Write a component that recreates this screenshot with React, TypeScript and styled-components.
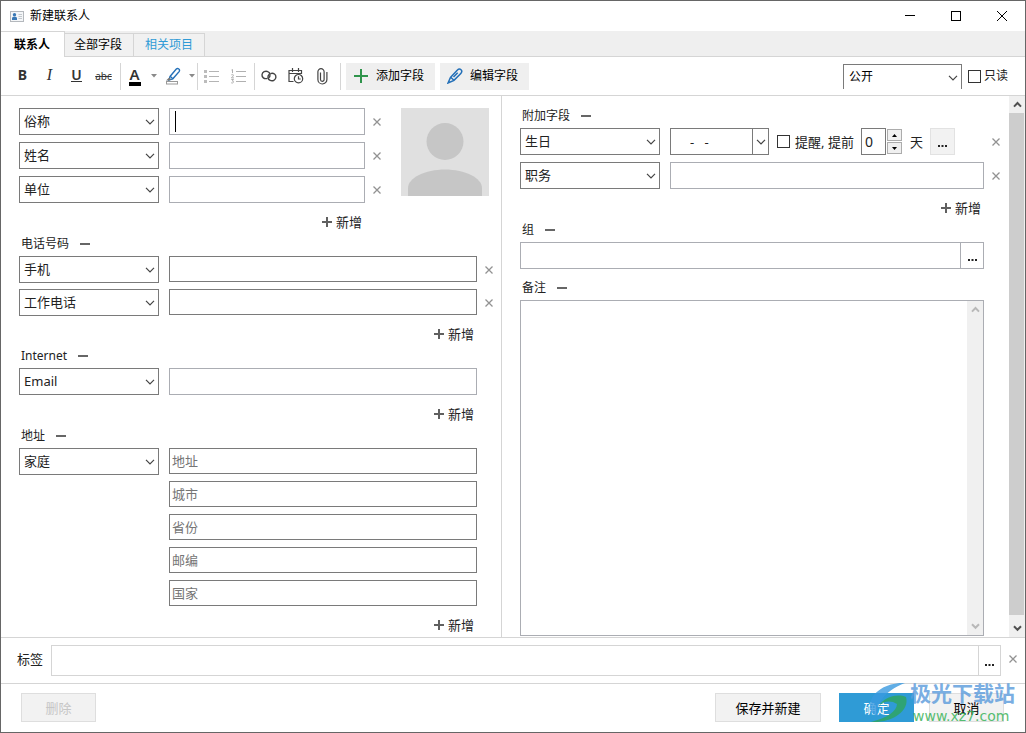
import React from "react";
import styled, { createGlobalStyle, css } from "styled-components";

const line = "#d5d5d5";
const dark = "#7a7a7a";
const light = "#abadb3";

const GlobalStyle = createGlobalStyle`
  *, *::before, *::after { box-sizing: border-box; }
  body { margin: 0; background: #fff; }
  body, button, input, select, textarea {
    font-family: "Noto Sans", "Noto Sans CJK SC", sans-serif;
    font-size: 13px;
    line-height: 18px;
    color: #222;
  }
  button { background: none; border: 0; padding: 0; margin: 0; }
  svg { display: block; }
`;

const Window = styled.div`
  position: relative;
  display: flex;
  flex-direction: column;
  min-height: 100vh;
  border: 1px solid #666;
  background: #fff;
`;

const TitleBar = styled.header`
  display: flex;
  align-items: center;
  height: 30px;
  padding-left: 9px;
`;
const Title = styled.h1`
  flex: 1;
  margin: 0 0 0 6px;
  font-size: 12px;
  font-weight: 400;
  color: #000;
`;
const CaptionButton = styled.button`
  display: flex;
  align-items: center;
  justify-content: center;
  width: 46px;
  height: 30px;
`;

const TabBar = styled.nav`
  display: flex;
  align-items: flex-end;
  height: 26px;
  background: #efefef;
  box-shadow: inset 0 -1px 0 ${line};
`;
const Tab = styled.button<{ $active?: boolean; $accent?: boolean }>`
  height: 24px;
  padding: 0 11px 0 ${(p) => (p.$accent ? 11 : 9)}px;
  border: 1px solid ${line};
  border-left: 0;
  background: #f1f1f1;
  font-size: 12px;
  color: ${(p) => (p.$accent ? "#2f9bd6" : "#000")};
  ${(p) =>
    p.$active &&
    css`
      height: 26px;
      padding: 0 14px 0 13px;
      border-bottom: 0;
      background: #fff;
      font-weight: 700;
    `}
`;

const Toolbar = styled.div`
  display: flex;
  align-items: center;
  height: 39px;
  padding: 0 17px 0 8px;
  border-bottom: 1px solid ${line};
`;
const ToolGroup = styled.div<{ $end?: number }>`
  display: flex;
  align-items: center;
  height: 27px;
  padding-right: ${(p) => p.$end ?? 0}px;
  border-right: 1px solid ${line};
`;
const ToolButton = styled.button<{ $narrow?: boolean }>`
  display: flex;
  align-items: center;
  justify-content: center;
  width: ${(p) => (p.$narrow ? 11 : 27)}px;
  height: 27px;
  color: #333;
`;
const Glyph = styled.span<{ $kind: "bold" | "italic" | "underline" | "strike" | "color" }>`
  font-size: 14px;
  line-height: 16px;
  margin-bottom: 2px;
  ${(p) => p.$kind === "bold" && "font-weight: 700;"}
  ${(p) => p.$kind === "italic" && 'font-family: "Liberation Serif", serif; font-style: italic; font-size: 16px;'}
  ${(p) => p.$kind === "underline" && "font-weight: 600; border-bottom: 1px solid #333; line-height: 13px;"}
  ${(p) => p.$kind === "strike" && "font-size: 10px; text-decoration: line-through; margin-bottom: 0;"}
  ${(p) => p.$kind === "color" && "font-size: 15px; font-weight: 600; border-bottom: 4px solid #000; width: 12px; text-align: center; margin-bottom: 0;"}
`;
const FieldButton = styled.button`
  display: flex;
  align-items: center;
  gap: 7px;
  height: 27px;
  margin-left: 5px;
  padding: 0 11px 0 7px;
  background: #efefef;
  font-size: 12px;
  color: #000;
`;
const Spacer = styled.div`
  flex: 1;
`;

const SelectWrap = styled.div<{ $open?: boolean }>`
  position: relative;
  flex: none;
  width: ${(p) => (p.$open ? 119 : 140)}px;
  height: ${(p) => (p.$open ? 25 : 27)}px;
  select {
    appearance: none;
    width: 100%;
    height: 100%;
    padding: 0 20px 2px 4px;
    border: 1px solid ${dark};
    border-radius: 0;
    background: #fff;
    ${(p) => p.$open && "border-bottom: 0; padding: 0 20px 0 5px; font-size: 12px; color: #000;"}
  }
  svg {
    position: absolute;
    right: 4px;
    top: 11px;
    pointer-events: none;
  }
`;

const CheckLabel = styled.label<{ $small?: boolean }>`
  display: flex;
  align-items: center;
  gap: ${(p) => (p.$small ? 3 : 5)}px;
  margin-left: ${(p) => (p.$small ? 6 : 8)}px;
  white-space: nowrap;
  font-size: ${(p) => (p.$small ? 12 : 13)}px;
  input {
    appearance: none;
    width: 13px;
    height: 13px;
    margin: 0;
    border: 1px solid #333;
    background: #fff;
  }
`;

const Body = styled.main`
  flex: 1;
  display: flex;
  min-height: 542px;
  border-bottom: 1px solid ${line};
`;
const Pane = styled.section<{ $left?: boolean }>`
  display: flex;
  flex-direction: column;
  flex: ${(p) => (p.$left ? "501 1 0" : "507 1 0")};
  min-width: 0;
  padding: ${(p) => (p.$left ? "12px 0 0 18px" : "10px 1px 1px 18px")};
  ${(p) => p.$left && `border-right: 1px solid ${line};`}
`;
const Person = styled.div`
  display: flex;
  gap: 12px;
  padding-right: 12px;
`;
const PersonFields = styled.div`
  flex: 1;
  min-width: 0;
`;
const Rows = styled.div`
  display: flex;
  flex-direction: column;
  gap: 7px;
  min-width: 0;
`;
const AddressLines = styled(Rows)`
  flex: 1;
`;
const Row = styled.div<{ $short?: boolean }>`
  display: flex;
  align-items: flex-start;
  gap: 10px;
  height: ${(p) => (p.$short ? "26px" : "auto")};
`;
const Field = styled.div`
  display: flex;
  flex: 1;
  min-width: 0;
`;
const GroupRow = styled.div`
  display: flex;
`;
const InputCell = styled.div`
  position: relative;
  flex: 1;
  min-width: 0;
`;
const TextInput = styled.input<{ $dark?: boolean }>`
  display: block;
  width: 100%;
  height: ${(p) => (p.$dark ? 26 : 27)}px;
  padding: 0 2px;
  border: 1px solid ${(p) => (p.$dark ? dark : light)};
  border-radius: 0;
  outline: 0;
  background: #fff;
  &::placeholder { color: #757575; opacity: 1; }
`;
const Caret = styled.span`
  position: absolute;
  left: 6px;
  top: 3px;
  width: 1px;
  height: 21px;
  background: #000;
`;
const RemoveButton = styled.button`
  display: flex;
  align-items: center;
  justify-content: center;
  flex: none;
  width: 24px;
  height: 27px;
`;
const EndGap = styled.div`
  flex: none;
  width: 24px;
`;
const AddRow = styled.div`
  display: flex;
  justify-content: flex-end;
  margin-top: 10px;
  padding-right: 27px;
`;
const PersonAdd = styled(AddRow)``;
const AddButton = styled.button`
  display: flex;
  align-items: center;
  gap: 4px;
  height: 18px;
`;
const Heading = styled.div<{ $top?: number }>`
  display: flex;
  align-items: center;
  gap: 11px;
  height: 20px;
  margin: ${(p) => p.$top ?? 0}px 0 2px 2px;
  h2 {
    margin: 0;
    font-size: 12px;
    font-weight: 400;
  }
`;

const DateBox = styled.div`
  display: flex;
  width: 99px;
  height: 27px;
  border: 1px solid ${dark};
  input {
    flex: 1;
    min-width: 0;
    padding: 0 0 0 19px;
    border: 0;
    outline: 0;
  }
  button {
    display: flex;
    align-items: center;
    justify-content: center;
    width: 16px;
    border-left: 1px solid ${dark};
  }
`;
const Reminder = styled.div`
  display: flex;
  align-items: center;
  flex: 1;
  min-width: 0;
  height: 27px;
`;
const DayCount = styled.input`
  width: 25px;
  height: 27px;
  margin-left: 7px;
  padding: 0 0 1px 3px;
  border: 1px solid ${dark};
  border-radius: 0;
  font-size: 14px;
  outline: 0;
`;
const Spinner = styled.div`
  display: flex;
  flex-direction: column;
  gap: 1px;
  margin: 0 8px 0 1px;
  button {
    display: flex;
    align-items: center;
    justify-content: center;
    width: 15px;
    height: 12px;
    border: 1px solid #acacac;
    background: #f0f0f0;
  }
`;
const MoreButton = styled.button<{ $kind: "solid" | "inner" | "tag" }>`
  display: flex;
  align-items: center;
  justify-content: center;
  padding-top: 9px;
  flex: none;
  ${(p) => p.$kind === "solid" && "width: 25px; height: 27px; margin-left: 7px; border: 1px solid #e2e2e2; background: #f2f2f2;"}
  ${(p) => p.$kind === "inner" && `width: 23px; border-left: 1px solid ${light};`}
  ${(p) => p.$kind === "tag" && `width: 22px; border-left: 1px solid ${line};`}
`;
const Combined = styled.div<{ $tag?: boolean }>`
  display: flex;
  flex: 1;
  min-width: 0;
  height: ${(p) => (p.$tag ? 31 : 27)}px;
  border: 1px solid ${(p) => (p.$tag ? line : light)};
  input {
    flex: 1;
    min-width: 0;
    padding: 0 4px;
    border: 0;
    outline: 0;
  }
`;
const Notes = styled.div`
  display: flex;
  flex: 1;
  min-height: 0;
  margin-right: 24px;
  border: 1px solid ${light};
  textarea {
    flex: 1;
    min-width: 0;
    padding: 4px;
    border: 0;
    outline: 0;
    resize: none;
    overflow: hidden;
  }
`;
const Scrollbar = styled.div`
  display: flex;
  flex-direction: column;
  flex: none;
  width: 16px;
  background: #f0f0f0;
  button {
    display: flex;
    align-items: center;
    justify-content: center;
    height: 17px;
  }
`;
const Track = styled.div`
  display: flex;
  flex-direction: column;
  flex: 1;
`;
const Thumb = styled.div`
  width: 15px;
  height: 99%;
  background: #cdcdcd;
`;

const TagRow = styled.div`
  display: flex;
  align-items: center;
  height: 46px;
  padding-left: 16px;
  border-bottom: 1px solid ${line};
  label { margin: 0 8px 4px 0; }
  ${RemoveButton} { margin-bottom: 4px; }
`;
const Footer = styled.footer`
  display: flex;
  align-items: center;
  gap: 15px;
  height: 48px;
  padding: 0 21px 1px 20px;
`;
const ActionButton = styled.button<{ $primary?: boolean; $wide?: boolean }>`
  width: ${(p) => (p.$wide ? 106 : 75)}px;
  height: 29px;
  margin-right: ${(p) => (p.$wide ? 3 : 0)}px;
  border: 1px solid ${(p) => (p.$primary ? "#2f9bd6" : "#dedede")};
  background: ${(p) => (p.$primary ? "#2f9bd6" : "#f2f2f2")};
  color: ${(p) => (p.$primary ? "#fff" : "#000")};
  &:disabled { color: #c6c6c6; }
`;

const Watermark = styled.div`
  position: absolute;
  right: 10px;
  bottom: 6px;
  display: flex;
  align-items: center;
  pointer-events: none;
  opacity: 0.8;
`;
const WatermarkText = styled.div`
  strong {
    display: block;
    font-size: 21px;
    line-height: 26px;
    font-weight: 700;
    color: #5a9bdc;
  }
  span {
    display: block;
    margin-left: 3px;
    font-family: "DejaVu Sans", sans-serif;
    font-size: 14px;
    line-height: 20px;
    color: #2fb050;
  }
`;

const Chevron = () => (
  <svg width="10" height="6" viewBox="0 0 10 6" fill="none" stroke="#444" strokeWidth="1.2">
    <path d="M1 0.8 5 4.8 9 0.8" />
  </svg>
);
const ScrollArrow = ({ down, pale }: { down?: boolean; pale?: boolean }) => (
  <svg width="9" height="7" viewBox="0 0 9 7" fill="none" stroke={pale ? "#b8b8b8" : "#505050"} strokeWidth="2">
    <path d={down ? "M1 1.2 4.5 4.8 8 1.2" : "M1 5.6 4.5 2 8 5.6"} />
  </svg>
);
const CrossIcon = () => (
  <svg width="8" height="8" viewBox="0 0 8 8" stroke="#929292" strokeWidth="1.3">
    <path d="M0.5 0.5 7.5 7.5M7.5 0.5 0.5 7.5" />
  </svg>
);
const Plus = () => (
  <svg width="10" height="10" viewBox="0 0 10 10" fill="#606060">
    <path d="M4 0h2v4h4v2H6v4H4V6H0V4h4z" />
  </svg>
);
const Minus = () => (
  <svg width="10" height="2" viewBox="0 0 10 2" fill="#666">
    <rect width="10" height="2" />
  </svg>
);
const Dots = () => (
  <svg width="9" height="2" viewBox="0 0 9 2" fill="#222">
    <rect width="2" height="2" />
    <rect x="3.5" width="2" height="2" />
    <rect x="7" width="2" height="2" />
  </svg>
);
const Drop = () => (
  <svg width="6" height="4" viewBox="0 0 6 4" fill="#8a8a8a">
    <path d="M0 0h6L3 3.5z" />
  </svg>
);
const CardIcon = () => (
  <svg width="14" height="11" viewBox="0 0 14 11">
    <rect x="0.5" y="0.5" width="13" height="10" fill="#f4f6f8" stroke="#b4b8bd" />
    <circle cx="4.5" cy="3.8" r="1.7" fill="#3a78b5" />
    <path d="M2 9V7.3c0-1 .8-1.5 2.5-1.5S7 6.3 7 7.3V9z" fill="#3a78b5" />
    <path d="M8.5 3.5H12M8.5 5.5H12M8.5 7.5H12" stroke="#c3c8cd" />
  </svg>
);
const HighlightIcon = () => (
  <svg width="16" height="18" viewBox="0 0 16 18" fill="none">
    <path d="M5 9.5 11.3 2.1Q12.5 1 13.8 2t.3 2.6L7.8 11.8 4 13z" stroke="#2470b8" strokeWidth="1.4" />
    <path d="M5.2 9.3 7.9 11.7" stroke="#2470b8" strokeWidth="1.2" />
    <path d="M4.3 10.5 1 13.5h3.5l1.5-1z" fill="#777" />
    <rect x="1.5" y="14.5" width="11" height="2.5" stroke="#999" />
  </svg>
);
const BulletIcon = () => (
  <svg width="15" height="15" viewBox="0 0 15 15">
    <path d="M0 1h3v3H0zM0 6h3v3H0zM0 11h3v3H0z" fill="#bcbcbc" />
    <path d="M5 2.5H15M5 7.5H15M5 12.5H15" stroke="#b4b4b4" />
  </svg>
);
const NumberIcon = () => (
  <svg width="15" height="15" viewBox="0 0 15 15" fill="none" stroke="#b0b0b0">
    <path d="M5 2.5H15M5 7.5H15M5 12.5H15" />
    <path d="M.5 1 1.500.5V4M.3 5.9Q1.5 4.9 2.4 5.9 2.600 6.9.4 8.9H3M.3 10.500H2.5L1.3 12Q3 12.2 2.3 13.5 1.5 14.5.2 13.8" />
  </svg>
);
const LinkIcon = () => (
  <svg width="16" height="14" viewBox="0 0 16 14" fill="none" stroke="#444" strokeWidth="1.4">
    <path d="M6.500 9.300C3 10.600.8 8 1 5.800 1.300 3 4.300 1.500 6.800 2.600 9.300 3.600 9.900 6.800 7.600 9" />
    <path d="M9.300 4.700C12.800 3.400 15 5.800 14.900 8.200 14.700 11 11.600 12.500 9.200 11.400 6.600 10.300 6.100 7.100 8.400 5" />
  </svg>
);
const CalendarIcon = () => (
  <svg width="16" height="16" viewBox="0 0 16 16" fill="none" stroke="#444" strokeWidth="1.2">
    <path d="M5.500 13.500H1V2.500H13.500V6M1 5.500H13.500M4.500 0V4M10.500 0V4" />
    <circle cx="10.500" cy="10.700" r="4.200" />
    <path d="M10.500 8.300V11H12.700" />
  </svg>
);
const ClipIcon = () => (
  <svg width="12" height="17" viewBox="0 0 12 17" fill="none" stroke="#444" strokeWidth="1.2">
    <path d="M3.500 4.500V11.500a1.800 1.800 0 0 0 3.600 0V3.800a2.900 2.900 0 0 0-6.200 0V11.500a4.500 4.500 0 0 0 9 0V4" />
  </svg>
);
const AddIcon = () => (
  <svg width="16" height="14" viewBox="0 0 16 14">
    <path d="M8 0V14M1 7H15" stroke="#2f944b" strokeWidth="2" />
  </svg>
);
const PenIcon = () => (
  <svg width="16" height="16" viewBox="0 0 16 16" fill="none" stroke="#2470b8" strokeWidth="1.500">
    <path d="M1 15 3.500 9.500 10.200 2.200Q12.300.2 14 1.700T13.800 5.600L7 12.400z" />
    <path d="M3.700 9.300 6.900 12.300M6.500 9 10.700 4.700" />
  </svg>
);

function Select({ name, value, open }: { name: string; value: string; open?: boolean }) {
  return (
    <SelectWrap $open={open}>
      <select aria-label={name} defaultValue={value}>
        <option>{value}</option>
      </select>
      <Chevron />
    </SelectWrap>
  );
}

function Remove({ name }: { name: string }) {
  return (
    <RemoveButton aria-label={`移除${name}`}>
      <CrossIcon />
    </RemoveButton>
  );
}

function FieldRow({ value, isDark, removable = true, focused }: { value: string; isDark?: boolean; removable?: boolean; focused?: boolean }) {
  return (
    <Row $short={isDark}>
      <Select name="字段类型" value={value} />
      <Field>
        <InputCell>
          <TextInput aria-label={value} $dark={isDark} />
          {focused && <Caret />}
        </InputCell>
        {removable ? <Remove name={value} /> : <EndGap />}
      </Field>
    </Row>
  );
}

function Add() {
  return (
    <PersonAdd>
      <AddButton>
        <Plus />
        新增
      </AddButton>
    </PersonAdd>
  );
}

function SectionHeading({ text, top }: { text: string; top?: number }) {
  return (
    <Heading $top={top}>
      <h2>{text}</h2>
      <button aria-label={`折叠${text}`}>
        <Minus />
      </button>
    </Heading>
  );
}

export default function App() {
  return (
    <>
      <GlobalStyle />
      <Window>
        <TitleBar>
          <CardIcon />
          <Title>新建联系人</Title>
          <CaptionButton aria-label="最小化">
            <svg width="10" height="10" stroke="#000"><path d="M0 4.5H10" /></svg>
          </CaptionButton>
          <CaptionButton aria-label="最大化">
            <svg width="10" height="10" stroke="#000" fill="none"><rect x=".5" y=".5" width="9" height="9" /></svg>
          </CaptionButton>
          <CaptionButton aria-label="关闭">
            <svg width="10" height="10" stroke="#000"><path d="M0 0 10 10M10 0 0 10" /></svg>
          </CaptionButton>
        </TitleBar>

        <TabBar>
          <Tab $active>联系人</Tab>
          <Tab>全部字段</Tab>
          <Tab $accent>相关项目</Tab>
        </TabBar>

        <Toolbar>
          <ToolGroup $end={3}>
            <ToolButton aria-label="粗体"><Glyph $kind="bold">B</Glyph></ToolButton>
            <ToolButton aria-label="斜体"><Glyph $kind="italic">I</Glyph></ToolButton>
            <ToolButton aria-label="下划线"><Glyph $kind="underline">U</Glyph></ToolButton>
            <ToolButton aria-label="删除线"><Glyph $kind="strike">abc</Glyph></ToolButton>
          </ToolGroup>
          <ToolGroup>
            <ToolButton aria-label="文字颜色"><Glyph $kind="color">A</Glyph></ToolButton>
            <ToolButton $narrow aria-label="选择文字颜色"><Drop /></ToolButton>
            <ToolButton aria-label="突出显示"><HighlightIcon /></ToolButton>
            <ToolButton $narrow aria-label="选择突出显示颜色"><Drop /></ToolButton>
          </ToolGroup>
          <ToolGroup $end={2}>
            <ToolButton aria-label="项目符号"><BulletIcon /></ToolButton>
            <ToolButton aria-label="编号"><NumberIcon /></ToolButton>
          </ToolGroup>
          <ToolGroup $end={4}>
            <ToolButton aria-label="链接"><LinkIcon /></ToolButton>
            <ToolButton aria-label="日期时间"><CalendarIcon /></ToolButton>
            <ToolButton aria-label="附件"><ClipIcon /></ToolButton>
          </ToolGroup>
          <FieldButton><AddIcon />添加字段</FieldButton>
          <FieldButton><PenIcon />编辑字段</FieldButton>
          <Spacer />
          <Select name="可见性" value="公开" open />
          <CheckLabel $small><input type="checkbox" />只读</CheckLabel>
        </Toolbar>

        <Body>
          <Pane $left>
            <Person>
              <PersonFields>
                <Rows>
                  <FieldRow value="俗称" focused />
                  <FieldRow value="姓名" />
                  <FieldRow value="单位" />
                </Rows>
                <Add />
              </PersonFields>
              <svg width="88" height="88" viewBox="0 0 88 88" role="img" aria-label="头像">
                <rect width="88" height="88" fill="#e0e0e0" />
                <circle cx="44" cy="33.5" r="18.5" fill="#c6c6c6" />
                <path d="M7 88V80C7 70 24 61.5 44 61.5S81 70 81 80V88z" fill="#c6c6c6" />
              </svg>
            </Person>

            <SectionHeading text="电话号码" top={3} />
            <Rows>
              <FieldRow value="手机" isDark />
              <FieldRow value="工作电话" isDark />
            </Rows>
            <Add />

            <SectionHeading text="Internet" top={3} />
            <FieldRow value="Email" removable={false} />
            <Add />

            <SectionHeading text="地址" top={3} />
            <Row>
              <Select name="地址类型" value="家庭" />
              <Field>
                <AddressLines>
                  {["地址", "城市", "省份", "邮编", "国家"].map((name) => (
                    <TextInput key={name} $dark placeholder={name} aria-label={name} />
                  ))}
                </AddressLines>
                <EndGap />
              </Field>
            </Row>
            <Add />
          </Pane>

          <Pane>
            <SectionHeading text="附加字段" />
            <Rows>
              <Row>
                <Select name="字段类型" value="生日" />
                <Reminder>
                  <DateBox>
                    <input aria-label="生日" defaultValue="-   -" />
                    <button aria-label="选择日期"><Chevron /></button>
                  </DateBox>
                  <CheckLabel><input type="checkbox" />提醒, 提前</CheckLabel>
                  <DayCount aria-label="提前天数" defaultValue="0" />
                  <Spinner>
                    <button aria-label="增加"><svg width="5" height="3"><path d="M0 3 2.5 0 5 3z" /></svg></button>
                    <button aria-label="减少"><svg width="5" height="3"><path d="M0 0H5L2.5 3z" /></svg></button>
                  </Spinner>
                  天
                  <MoreButton $kind="solid" aria-label="提醒选项"><Dots /></MoreButton>
                  <Spacer />
                  <Remove name="生日" />
                </Reminder>
              </Row>
              <FieldRow value="职务" />
            </Rows>
            <Add />

            <SectionHeading text="组" top={3} />
            <GroupRow>
              <Combined>
                <input aria-label="组" />
                <MoreButton $kind="inner" aria-label="选择组"><Dots /></MoreButton>
              </Combined>
              <EndGap />
            </GroupRow>

            <SectionHeading text="备注" top={9} />
            <Notes>
              <textarea aria-label="备注" />
              <Scrollbar>
                <button aria-label="向上滚动"><ScrollArrow pale /></button>
                <Track />
                <button aria-label="向下滚动"><ScrollArrow down pale /></button>
              </Scrollbar>
            </Notes>
          </Pane>

          <Scrollbar>
            <button aria-label="向上滚动"><ScrollArrow /></button>
            <Track><Thumb /></Track>
            <button aria-label="向下滚动"><ScrollArrow down /></button>
          </Scrollbar>
        </Body>

        <TagRow>
          <label htmlFor="tags">标签</label>
          <Combined $tag>
            <input id="tags" />
            <MoreButton $kind="tag" aria-label="选择标签"><Dots /></MoreButton>
          </Combined>
          <Remove name="标签" />
        </TagRow>

        <Footer>
          <ActionButton disabled>删除</ActionButton>
          <Spacer />
          <ActionButton $wide>保存并新建</ActionButton>
          <ActionButton $primary>确定</ActionButton>
          <ActionButton>取消</ActionButton>
        </Footer>

        <Watermark>
          <svg width="42" height="42" viewBox="0 0 42 42">
            <path d="M37 1C20 0 4 9 2 22c-1 6 2 11 8 12C7 23 16 9 37 1z" fill="#3a9ae0" />
            <path d="M11 24C15 16 28 11 38 15 42 29 24 41 3 40 19 36 29 29 29 22 23 18 15 19 11 24z" fill="#2fa65c" />
          </svg>
          <WatermarkText>
            <strong>极光下载站</strong>
            <span>www.xz7.com</span>
          </WatermarkText>
        </Watermark>
      </Window>
    </>
  );
}
